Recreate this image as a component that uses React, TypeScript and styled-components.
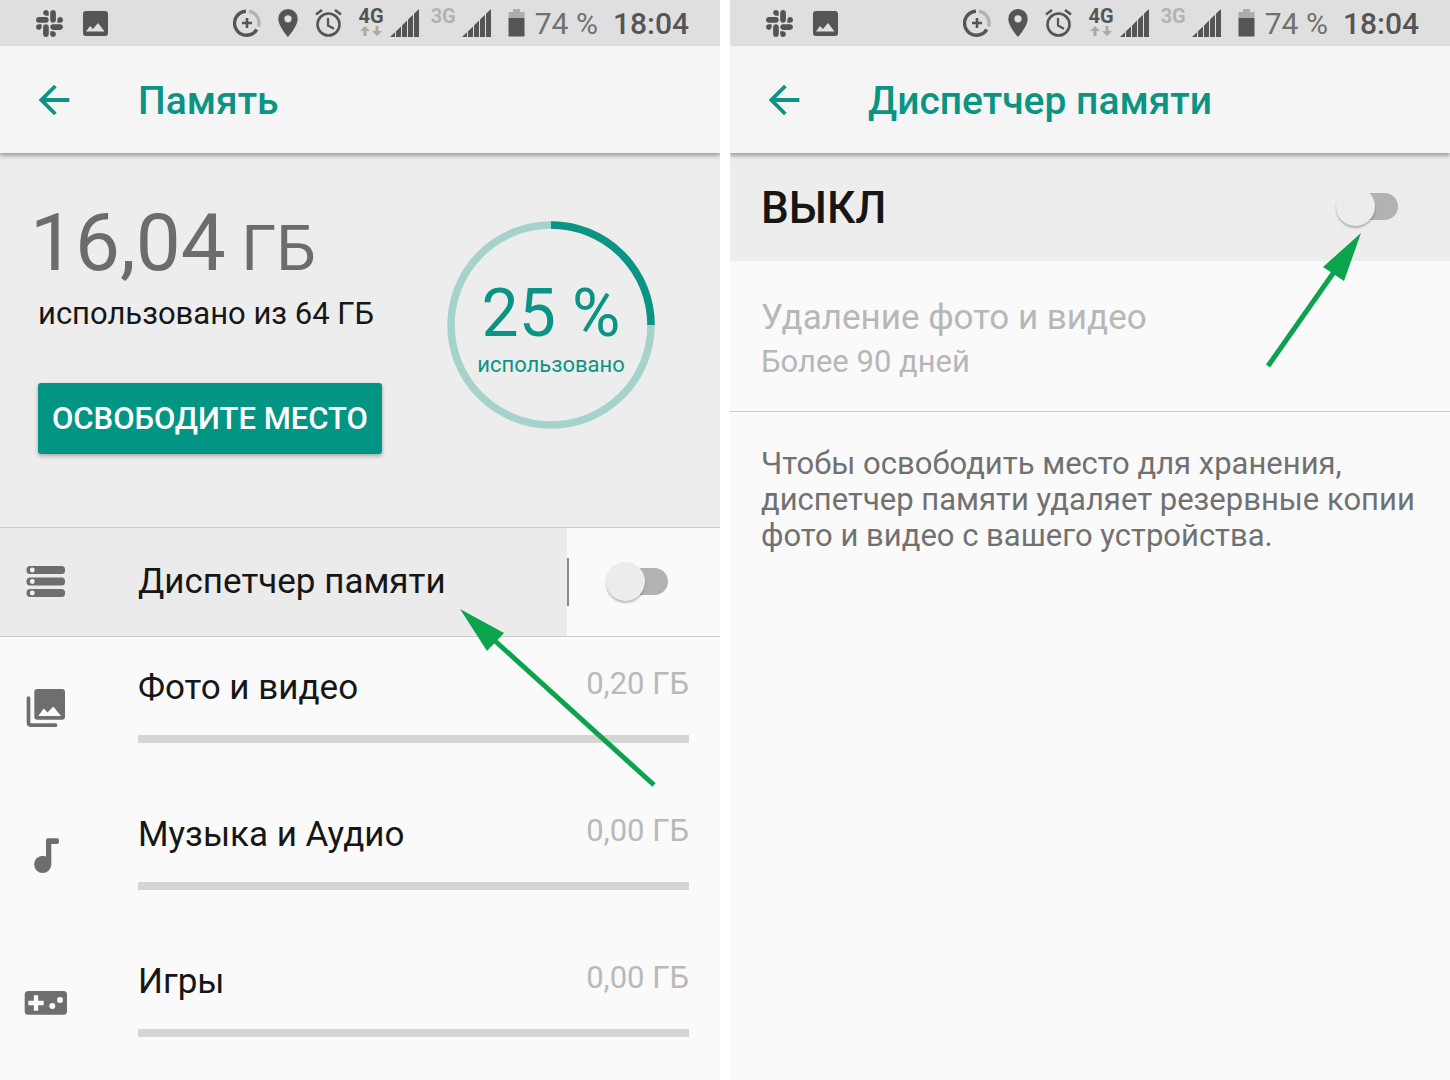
import React from "react";
import styled, { createGlobalStyle } from "styled-components";
import { FaSlack } from "react-icons/fa";

const teal = "#0b9483";
const dark = "#555555";
const iconGray = "#6e6e6e";
const arrowGreen = "#0ba44c";

const GlobalStyle = createGlobalStyle`
  *, *::before, *::after { box-sizing: border-box; }
  body {
    margin: 0;
    background: #ffffff;
    font-family: Roboto, "Liberation Sans", sans-serif;
    color: #161616;
  }
  h1, h2, p { margin: 0; }
`;

const Screens = styled.div`
  display: grid;
  grid-template-columns: 1fr 1fr;
  gap: 10px;
  min-height: 100vh;
`;

const Phone = styled.section`
  background: #fafafa;
  overflow: hidden;
`;

const StatusBar = styled.div`
  display: flex;
  align-items: center;
  justify-content: space-between;
  height: 46px;
  padding: 0 31px 0 36px;
  background: #dfdfdf;
  color: ${dark};
`;

const StatusGroup = styled.div<{ $gap: number }>`
  display: flex;
  align-items: center;
  gap: ${(p) => p.$gap}px;
  svg { display: block; flex: none; }
`;

const NetColumn = styled.div<{ $dim?: boolean }>`
  display: flex;
  flex-direction: column;
  align-items: center;
  height: 34px;
  font-size: 20px;
  line-height: 20px;
  font-weight: 700;
  color: ${(p) => (p.$dim ? "#b3b3b3" : dark)};
`;

const StatusText = styled.span<{ $strong?: boolean }>`
  padding-top: 2px;
  font-size: 30px;
  line-height: 44px;
  font-weight: ${(p) => (p.$strong ? 500 : 400)};
  color: ${(p) => (p.$strong ? dark : "#717171")};
  white-space: nowrap;
`;

const AppBar = styled.header`
  position: relative;
  z-index: 1;
  display: flex;
  align-items: center;
  height: 107px;
  padding-left: 31px;
  background: #f5f5f5;
  box-shadow: 0 3px 4px rgba(0, 0, 0, 0.32);
`;

const BackButton = styled.button`
  width: 107px;
  padding: 0;
  border: 0;
  background: none;
  color: ${teal};
  text-align: left;
  svg { display: block; }
`;

const Title = styled.h1`
  padding-top: 2px;
  font-size: 39px;
  line-height: 44px;
  font-weight: 500;
  color: ${teal};
`;

const Summary = styled.div`
  display: flex;
  justify-content: space-between;
  align-items: flex-start;
  padding: 50px 65px 73px 38px;
  background: #ededed;
  border-bottom: 1px solid #cccccc;
`;

const Amount = styled.p`
  font-size: 80px;
  line-height: 80px;
  color: #6c6c6c;
  margin-left: -8px;
`;

const Unit = styled.span`
  font-size: 63px;
  line-height: 1;
  white-space: pre;
`;

const AmountNote = styled.p`
  margin-top: 13px;
  font-size: 31px;
  line-height: 36px;
`;

const FreeButton = styled.button`
  height: 71px;
  margin-top: 51px;
  padding: 0 14px;
  border: 0;
  border-radius: 3px;
  background: #039583;
  box-shadow: 0 2px 4px rgba(0, 0, 0, 0.3);
  color: #ffffff;
  font-family: inherit;
  font-size: 31px;
  font-weight: 500;
  white-space: nowrap;
`;

const Ring = styled.div`
  display: grid;
  margin-top: 18px;
  color: ${teal};
  > * { grid-area: 1 / 1; }
  svg { display: block; }
`;

const RingText = styled.div`
  display: flex;
  flex-direction: column;
  align-items: center;
  justify-content: center;
  gap: 4px;
  padding-top: 10px;
`;

const RingValue = styled.span`
  font-size: 66px;
  line-height: 66px;
`;

const RingNote = styled.span`
  font-size: 22px;
  line-height: 28px;
`;

const ManagerRow = styled.div`
  display: flex;
  align-items: center;
  height: 109px;
  border-bottom: 1px solid #cccccc;
`;

const ManagerButton = styled.button`
  flex: 1;
  display: flex;
  align-items: center;
  align-self: stretch;
  padding: 0 0 0 23px;
  border: 0;
  background: #ebebeb;
  color: inherit;
  font-family: inherit;
  font-size: 35px;
  line-height: 40px;
  text-align: left;
`;

const IconCell = styled.span`
  flex: none;
  width: 115px;
  svg { display: block; }
`;

const Anchor = styled.span`
  position: relative;
  display: inline-block;
`;

const Divider = styled.span`
  width: 2px;
  height: 48px;
  background: #8a8a8a;
`;

const SwitchCell = styled.div`
  display: flex;
  padding: 0 52px 0 37px;
`;

const Switch = styled.input`
  position: relative;
  display: block;
  width: 62px;
  height: 40px;
  margin: 0;
  appearance: none;
  &::before {
    content: "";
    position: absolute;
    inset: 6px 0 7px 14px;
    border-radius: 14px;
    background: #b2b2b2;
  }
  &::after {
    content: "";
    position: absolute;
    top: 0;
    left: 0;
    width: 39px;
    height: 39px;
    border-radius: 50%;
    background: #ececec;
    box-shadow: 0 2px 2px rgba(0, 0, 0, 0.25);
  }
`;

const Row = styled.div`
  display: flex;
  align-items: flex-start;
  height: 147px;
  padding: 31px 31px 0 23px;
`;

const RowIcon = styled(IconCell)`
  padding-top: 17px;
`;

const RowBody = styled.div`
  flex: 1;
`;

const RowHead = styled.div`
  display: flex;
  justify-content: space-between;
  align-items: flex-start;
`;

const RowTitle = styled.label`
  font-size: 35px;
  line-height: 40px;
`;

const RowValue = styled.span`
  font-size: 31px;
  line-height: 32px;
  color: #b9b9b9;
`;

const Bar = styled.progress`
  display: block;
  width: 100%;
  height: 8px;
  margin-top: 27px;
  border: 0;
  appearance: none;
  background: #d5d5d5;
  &::-webkit-progress-bar { background: #d5d5d5; }
  &::-webkit-progress-value { background: ${teal}; }
`;

const StateBand = styled.div`
  display: flex;
  align-items: center;
  justify-content: space-between;
  height: 108px;
  padding: 0 52px 0 31px;
  background: #ededed;
`;

const StateLabel = styled.label`
  padding-top: 2px;
  font-size: 44px;
  line-height: 52px;
  font-weight: 500;
`;

const DisabledItem = styled.div`
  padding: 35px 31px 27px;
  border-bottom: 1px solid #cccccc;
  color: #b7b7b7;
`;

const DisabledTitle = styled.h2`
  font-size: 35px;
  line-height: 44px;
  font-weight: 400;
`;

const DisabledNote = styled.p`
  font-size: 31px;
  line-height: 44px;
`;

const Hint = styled.p`
  padding: 34px 31px;
  font-size: 31px;
  line-height: 36px;
  color: #717171;
`;

const ArrowSvg = styled.svg<{ $x: number; $y: number }>`
  position: absolute;
  z-index: 2;
  left: ${(p) => p.$x}px;
  top: ${(p) => p.$y}px;
  pointer-events: none;
`;

const Signal = () => (
  <svg width="29" height="28" viewBox="0 0 29 28" fill={dark}>
    <path d="M0 28L5 23.200V28Z M6 28V22.200L11 17.400V28Z M12 28V16.400L17 11.600V28Z M18 28V10.600L23 5.800V28Z M24 28V4.800L29 0V28Z" />
  </svg>
);

const Status = () => (
  <StatusBar>
    <StatusGroup $gap={20}>
      <FaSlack size={27} viewBox="0 32 448 448" />
      <svg width="25" height="25" viewBox="0 0 25 25">
        <rect width="25" height="25" rx="3" fill={dark} />
        <path d="M3 20.500L7 15L10 18L15 12L21.500 20.500Z" fill="#dfdfdf" />
      </svg>
    </StatusGroup>
    <StatusGroup $gap={15}>
      <StatusGroup $gap={10}>
        <StatusGroup $gap={17}>
          <svg width="28" height="28" viewBox="0 0 28 28" fill="none" strokeWidth="3.400">
            <path d="M16 2.200A12 12 0 0 1 25.500 17.500" stroke="#b3b3b3" />
            <path d="M13 2.200A12 12 0 1 0 23.800 20.500" stroke={dark} />
            <path d="M14 9V19M9 14H19" stroke={dark} strokeWidth="2.600" />
          </svg>
          <svg width="20" height="28" viewBox="0 0 20 28" fill={dark} fillRule="evenodd">
            <path d="M10 0A9.700 9.700 0 0 0 .300 9.700C.300 17 10 28 10 28S19.700 17 19.700 9.700A9.700 9.700 0 0 0 10 0ZM10 6.200A3.600 3.600 0 1 1 10 13.400A3.600 3.600 0 0 1 10 6.200Z" />
          </svg>
          <svg width="27" height="28" viewBox="0 0 27 28" fill="none" stroke={dark} strokeWidth="2.600">
            <circle cx="13.500" cy="15.500" r="11" />
            <path d="M13 9V16.500L19 19.800" strokeWidth="2.200" />
            <path d="M1 5.500L7 1M26 5.500L20 1" />
          </svg>
          <StatusGroup $gap={12}>
            <StatusGroup $gap={6}>
              <NetColumn>
                4G
                <svg width="24" height="12" viewBox="0 0 24 12" fill="#aaaaaa">
                  <path d="M6 0L11 5H7.500V10H4.500V5H1Z M18 10L13 5H16.500V0H19.500V5H23Z" />
                </svg>
              </NetColumn>
              <Signal />
            </StatusGroup>
            <StatusGroup $gap={6}>
              <NetColumn $dim>3G</NetColumn>
              <Signal />
            </StatusGroup>
          </StatusGroup>
          <svg width="17" height="28" viewBox="0 0 17 28">
            <path d="M5 0H12V3H16.500V10H.500V3H5Z" fill="#acacac" />
            <path d="M.500 9H16.500V27.500H.500Z" fill={dark} />
          </svg>
        </StatusGroup>
        <StatusText>74 %</StatusText>
      </StatusGroup>
      <StatusText $strong>18:04</StatusText>
    </StatusGroup>
  </StatusBar>
);

const Header = ({ title }: { title: string }) => (
  <AppBar>
    <BackButton aria-label="Назад">
      <svg width="46" height="46" viewBox="0 0 24 24" fill="currentColor">
        <path d="M20 11H7.830l5.590-5.590L12 4l-8 8 8 8 1.410-1.410L7.830 13H20v-2z" />
      </svg>
    </BackButton>
    <Title>{title}</Title>
  </AppBar>
);

const ManagerIcon = () => (
  <svg width="46" height="46" viewBox="0 0 46 46" fill={iconGray}>
    {[7, 18.5, 30].map((y) => (
      <g key={y}>
        <rect x="3.500" y={y} width="38.500" height="8" rx="3.500" />
        <circle cx="9.300" cy={y + 4} r="2.400" fill="#f4f4f4" />
      </g>
    ))}
  </svg>
);

const PhotoIcon = () => (
  <svg width="46" height="46" viewBox="0 0 46 46" fill={iconGray}>
    <rect x="11.300" y="4" width="30.700" height="30.700" rx="3" />
    <path d="M15.300 31L20.700 23.500L24.500 27.500L30.300 21.500L38 31Z" fill="#fafafa" />
    <path d="M5.500 13V37.500Q5.500 40.200 8.200 40.200H32.500" fill="none" stroke={iconGray} strokeWidth="3.700" strokeLinecap="round" />
  </svg>
);

const MusicIcon = () => (
  <svg width="46" height="46" viewBox="0 0 46 46" fill={iconGray}>
    <circle cx="19.700" cy="32.300" r="8.600" />
    <path d="M23 8.300Q23 6.300 25 6.300H34Q36 6.300 36 8.300V10Q36 12 34 12H28.300V32.300H23Z" />
  </svg>
);

const GamesIcon = () => (
  <svg width="46" height="46" viewBox="0 0 46 46" fill={iconGray}>
    <rect x="1.700" y="12" width="42.300" height="23.700" rx="3.500" />
    <path d="M13 16.300V31.700M5.300 24H20.700" stroke="#fafafa" strokeWidth="4.300" />
    <circle cx="29.300" cy="27" r="3" fill="#fafafa" />
    <circle cx="37" cy="21" r="3" fill="#fafafa" />
  </svg>
);

const categories = [
  { id: "photo", title: "Фото и видео", value: "0,20 ГБ", icon: <PhotoIcon /> },
  { id: "music", title: "Музыка и Аудио", value: "0,00 ГБ", icon: <MusicIcon /> },
  { id: "games", title: "Игры", value: "0,00 ГБ", icon: <GamesIcon /> },
];

export default function App() {
  return (
    <>
      <GlobalStyle />
      <Screens>
        <Phone>
          <Status />
          <Header title="Память" />
          <Summary>
            <div>
              <Amount>
                16,04<Unit> ГБ</Unit>
              </Amount>
              <AmountNote>использовано из 64 ГБ</AmountNote>
              <FreeButton>ОСВОБОДИТЕ МЕСТО</FreeButton>
            </div>
            <Ring>
              <svg width="208" height="208" viewBox="0 0 208 208" fill="none" strokeWidth="7.500">
                <circle cx="104" cy="104" r="100" stroke="#a6d2cc" />
                <path d="M104 4A100 100 0 0 1 204 104" stroke={teal} />
              </svg>
              <RingText>
                <RingValue>25 %</RingValue>
                <RingNote>использовано</RingNote>
              </RingText>
            </Ring>
          </Summary>
          <ManagerRow>
            <ManagerButton>
              <IconCell>
                <ManagerIcon />
              </IconCell>
              <Anchor>
                Диспетчер памяти
                <ArrowSvg $x={320} $y={46} width="200" height="182" viewBox="0 0 200 182">
                  <path d="M2 1L46 25L29 43Z" fill={arrowGreen} />
                  <path d="M36 32L196 177" stroke={arrowGreen} strokeWidth="5" />
                </ArrowSvg>
              </Anchor>
            </ManagerButton>
            <Divider />
            <SwitchCell>
              <Switch type="checkbox" role="switch" aria-label="Диспетчер памяти" />
            </SwitchCell>
          </ManagerRow>
          {categories.map((c) => (
            <Row key={c.id}>
              <RowIcon>{c.icon}</RowIcon>
              <RowBody>
                <RowHead>
                  <RowTitle htmlFor={c.id}>{c.title}</RowTitle>
                  <RowValue>{c.value}</RowValue>
                </RowHead>
                <Bar id={c.id} value={0} max={64} />
              </RowBody>
            </Row>
          ))}
        </Phone>
        <Phone>
          <Status />
          <Header title="Диспетчер памяти" />
          <StateBand>
            <StateLabel htmlFor="manager-state">ВЫКЛ</StateLabel>
            <Anchor>
              <Switch id="manager-state" type="checkbox" role="switch" />
              <ArrowSvg $x={-71} $y={45} width="100" height="140" viewBox="0 0 100 140">
                <path d="M96 1L58 35L79 49Z" fill={arrowGreen} />
                <path d="M69 40L3 134" stroke={arrowGreen} strokeWidth="5" />
              </ArrowSvg>
            </Anchor>
          </StateBand>
          <DisabledItem>
            <DisabledTitle>Удаление фото и видео</DisabledTitle>
            <DisabledNote>Более 90 дней</DisabledNote>
          </DisabledItem>
          <Hint>
            Чтобы освободить место для хранения, диспетчер памяти удаляет резервные копии фото и видео с
            вашего устройства.
          </Hint>
        </Phone>
      </Screens>
    </>
  );
}
